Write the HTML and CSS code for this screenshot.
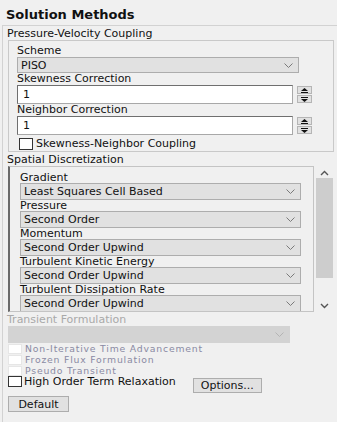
FILE: index.html
```html
<html>
    <head>
        <title>Solution Methods</title>
        <meta name="viewport" content="width=device-width, initial-scale=1.0">
        <link rel="stylesheet" href="styles.css">
    </head>
    <body>
        <div class="title">Solution Methods</div>
        <div class="panel">
            <div class="caption">Pressure-Velocity Coupling</div>
            <div class="group">
                <div class="label">Scheme</div>
                <div class="select wide">
                    <span>PISO</span>
                    <svg class="chev" width="9" height="5"><path d="M0.5 0.5 L4.5 4.5 L8.5 0.5" /></svg>
                </div>
                <div class="label">Skewness Correction</div>
                <div class="num-row">
                    <div class="num-input">1</div>
                    <div class="spinner">
                        <div class="spin-btn"><svg width="9" height="5"><path class="tri" d="M1 3 L4.5 0 L8 3 Z" /><path class="bar" d="M1 4.5 H8" /></svg></div>
                        <div class="spin-btn"><svg width="9" height="5"><path class="bar" d="M1 0.5 H8" /><path class="tri" d="M1 2 L4.5 5 L8 2 Z" /></svg></div>
                    </div>
                </div>
                <div class="label">Neighbor Correction</div>
                <div class="num-row">
                    <div class="num-input">1</div>
                    <div class="spinner">
                        <div class="spin-btn"><svg width="9" height="5"><path class="tri" d="M1 3 L4.5 0 L8 3 Z" /><path class="bar" d="M1 4.5 H8" /></svg></div>
                        <div class="spin-btn"><svg width="9" height="5"><path class="bar" d="M1 0.5 H8" /><path class="tri" d="M1 2 L4.5 5 L8 2 Z" /></svg></div>
                    </div>
                </div>
                <div class="check-row">
                    <span class="box"></span>
                    <span>Skewness-Neighbor Coupling</span>
                </div>
            </div>

            <div class="caption">Spatial Discretization</div>
            <div class="scroll-row">
                <div class="scroll-box">
                    <div class="label">Gradient</div>
                    <div class="select">
                        <span>Least Squares Cell Based</span>
                        <svg class="chev" width="9" height="5"><path d="M0.5 0.5 L4.5 4.5 L8.5 0.5" /></svg>
                    </div>
                    <div class="label">Pressure</div>
                    <div class="select">
                        <span>Second Order</span>
                        <svg class="chev" width="9" height="5"><path d="M0.5 0.5 L4.5 4.5 L8.5 0.5" /></svg>
                    </div>
                    <div class="label">Momentum</div>
                    <div class="select">
                        <span>Second Order Upwind</span>
                        <svg class="chev" width="9" height="5"><path d="M0.5 0.5 L4.5 4.5 L8.5 0.5" /></svg>
                    </div>
                    <div class="label">Turbulent Kinetic Energy</div>
                    <div class="select">
                        <span>Second Order Upwind</span>
                        <svg class="chev" width="9" height="5"><path d="M0.5 0.5 L4.5 4.5 L8.5 0.5" /></svg>
                    </div>
                    <div class="label">Turbulent Dissipation Rate</div>
                    <div class="select">
                        <span>Second Order Upwind</span>
                        <svg class="chev" width="9" height="5"><path d="M0.5 0.5 L4.5 4.5 L8.5 0.5" /></svg>
                    </div>
                </div>
                <div class="scrollbar">
                    <svg class="arrow" width="9" height="6"><path d="M1 5 L4.5 1.5 L8 5" /></svg>
                    <div class="thumb"></div>
                    <svg class="arrow down" width="9" height="6"><path d="M1 1 L4.5 4.5 L8 1" /></svg>
                </div>
            </div>

            <div class="caption disabled">Transient Formulation</div>
            <div class="select off">
                <span></span>
                <svg class="chev" width="9" height="5"><path d="M0.5 0.5 L4.5 4.5 L8.5 0.5" /></svg>
            </div>
            <div class="small-check"><span class="box"></span><span class="small-text">Non-Iterative Time Advancement</span></div>
            <div class="small-check"><span class="box"></span><span class="small-text">Frozen Flux Formulation</span></div>
            <div class="small-check"><span class="box"></span><span class="small-text">Pseudo Transient</span></div>

            <div class="relax-row">
                <span class="box"></span>
                <span class="relax-label">High Order Term Relaxation</span>
                <button class="win-button options">Options...</button>
            </div>
            <button class="win-button default">Default</button>
        </div>
    </body>
</html>
```

FILE: styles.css
```css
body {
    margin: 0;
    background-color: #F0F0F0;
    font-family: 'DejaVu Sans', Verdana, sans-serif;
    font-size: 11px;
    color: #111;
    overflow: hidden;
}
.title {
    height: 25px;
    line-height: 29px;
    padding-left: 6px;
    font-size: 13px;
    font-weight: bold;
}
.panel {
    margin-left: 2px;
    border-left: 1px solid #d2d2d2;
    border-top: 1px solid #d2d2d2;
    padding-left: 4px;
    height: 400px;
}
.caption {
    height: 12px;
    line-height: 12px;
    margin-top: 2px;
}
.caption.disabled {
    color: #a9a9a9;
}
.group {
    margin-left: 1px;
    width: 326px;
    box-sizing: border-box;
    border: 1px solid #c9c9c9;
    padding: 4px 0 1px 8px;
}
.label {
    height: 12px;
    line-height: 12px;
}
.scroll-box .label {
    height: 11px;
    line-height: 11px;
}
.select {
    display: flex;
    justify-content: space-between;
    align-items: center;
    box-sizing: border-box;
    width: 281px;
    height: 17px;
    padding: 0 5px 0 3px;
    background-color: #e1e1e1;
    border: 1px solid #adadad;
}
.select.wide {
    width: 282px;
    height: 16px;
}
.chev path {
    fill: none;
    stroke: #7a7a7a;
    stroke-width: 1;
}
.num-row {
    display: flex;
    align-items: flex-start;
    gap: 4px;
}
.num-input {
    box-sizing: border-box;
    width: 276px;
    height: 19px;
    line-height: 17px;
    padding-left: 5px;
    background-color: #fff;
    border: 1px solid #a8a8a8;
    border-top-color: #6f6f6f;
    border-left-color: #6f6f6f;
}
.spinner {
    display: flex;
    flex-direction: column;
    gap: 1px;
    padding-top: 1px;
}
.spin-btn {
    display: flex;
    align-items: center;
    justify-content: center;
    box-sizing: border-box;
    width: 15px;
    height: 8px;
    background-color: #e1e1e1;
    border: 1px solid #b5b5b5;
}
.spin-btn .tri {
    fill: #111;
}
.spin-btn .bar {
    stroke: #111;
    stroke-width: 1;
}
.check-row {
    display: flex;
    align-items: center;
    gap: 3px;
    height: 13px;
    margin: 2px 0 0 2px;
}
.check-row .box {
    box-sizing: border-box;
    width: 14px;
    height: 12px;
    background-color: #fff;
    border: 1px solid #333;
}
.scroll-row {
    display: flex;
    gap: 2px;
    margin-left: 1px;
}
.scroll-box {
    box-sizing: border-box;
    width: 306px;
    height: 146px;
    overflow: hidden;
    padding: 5px 0 0 10px;
    border: 1px solid #c4c4c4;
    border-left: 2px solid #6a6a6a;
}
.scrollbar {
    display: flex;
    flex-direction: column;
    align-items: center;
    width: 17px;
    height: 146px;
}
.arrow {
    margin-top: 4px;
}
.arrow path {
    fill: none;
    stroke: #555;
    stroke-width: 1.4;
}
.arrow.down {
    margin-top: auto;
    margin-bottom: 3px;
}
.thumb {
    width: 17px;
    height: 100px;
    margin-top: 2px;
    background-color: #cdcdcd;
}
.select.off {
    margin-left: 1px;
    width: 282px;
    background-color: #d3d3d3;
    border-color: #d3d3d3;
}
.select.off .chev path {
    stroke: #b4b4b4;
}
.small-check {
    display: flex;
    align-items: center;
    gap: 3px;
    height: 11px;
    margin-left: 1px;
    color: #8a8aa3;
}
.small-text {
    font-size: 9.3px;
    letter-spacing: 0.8px;
    line-height: 11px;
}
.small-check .box {
    box-sizing: border-box;
    width: 14px;
    height: 10px;
    background-color: #fff;
    border: 1px solid #e6e6e6;
}
.relax-row {
    display: flex;
    align-items: flex-start;
    height: 16px;
    margin: 0 0 0 1px;
}
.relax-row .box {
    box-sizing: border-box;
    width: 14px;
    height: 11px;
    background-color: #fff;
    border: 1px solid #333;
}
.relax-label {
    margin-left: 2px;
    line-height: 11px;
}
.win-button {
    box-sizing: border-box;
    padding: 0;
    font-family: 'DejaVu Sans', Verdana, sans-serif;
    font-size: 11px;
    color: #111;
    background-color: #e1e1e1;
    border: 1px solid #adadad;
    border-radius: 0;
}
.options {
    width: 69px;
    height: 15px;
    margin: 2px 0 0 17px;
    line-height: 12px;
}
.default {
    display: block;
    width: 61px;
    height: 16px;
    margin: 4px 0 0 1px;
    line-height: 13px;
}
```
